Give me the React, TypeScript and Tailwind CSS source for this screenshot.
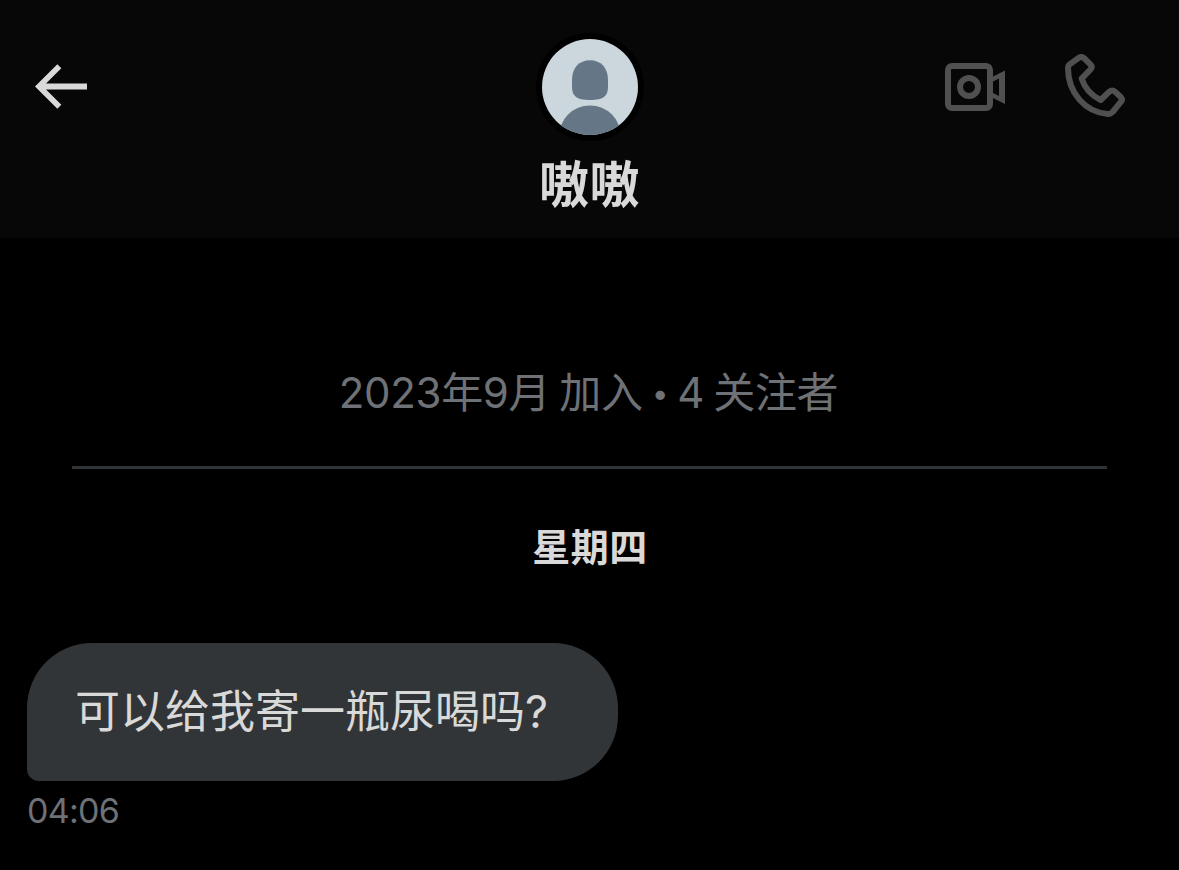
interface Message {
  id: number;
  text: string;
  time: string;
}

const CONTACT = {
  name: "嗷嗷",
  joined: "2023年9月 加入",
  followers: "4 关注者",
};

const MESSAGES: Message[] = [{ id: 1, text: "可以给我寄一瓶尿喝吗?", time: "04:06" }];

function BackIcon() {
  return (
    <svg className="mb-px h-[45px] w-[52px]" viewBox="0 0 156 134" fill="currentColor">
      <path d="M0 67 67 0l12 12-46 46h123v18H33l46 46-12 12z" />
    </svg>
  );
}

function VideoIcon() {
  return (
    <svg className="h-12 w-[60px]" viewBox="0 0 60 48" fill="none">
      <rect x="3" y="3" width="42" height="42" rx="4" stroke="currentColor" strokeWidth="6" />
      <circle cx="24" cy="24" r="9" stroke="currentColor" strokeWidth="6" />
      <path
        fill="currentColor"
        fillRule="evenodd"
        d="M47 14 60 7.500v33.500L47 34.500zM48 18.500v11.500l6 3V15.500z"
      />
    </svg>
  );
}

function PhoneIcon() {
  return (
    <svg className="mb-[3px] h-[63px] w-[60px]" viewBox="0 0 180 189" fill="none">
      <path
        stroke="currentColor"
        strokeWidth="18"
        strokeLinejoin="round"
        d="M9 42Q9 36 13 32L39 13Q49 5 58 13L76 31Q84 39 76 47L50 74C59 101 77 124 107 138L133 113Q142 106 150 113L167 129Q174 136 168 143L143 174Q136 181 128 180C62 175 9 118 9 42z"
      />
    </svg>
  );
}

function Avatar() {
  return (
    <div className="size-[108px] rounded-full bg-black p-1.5">
      <svg className="size-24 rounded-full bg-[#cbd6dd]" viewBox="0 0 96 96" fill="#657786">
        <path d="M48 21.300C37 21.300 30 29 30 41v6c0 10 4 14 18 14s18-4 18-14v-6c0-12-7-19.700-18-19.700z" />
        <circle cx="48" cy="97.500" r="31" />
      </svg>
    </div>
  );
}

function Header() {
  return (
    <header className="flex h-[238px] flex-col bg-[#070707] pt-[33px]">
      <div className="grid grid-cols-3 items-center pr-[54px] pl-[35px]">
        <button className="justify-self-start text-[#d9d9d9]" aria-label="返回">
          <BackIcon />
        </button>
        <div className="ml-[21px] justify-self-center">
          <Avatar />
        </div>
        <div className="flex items-center gap-[60px] justify-self-end text-[#505050]">
          <VideoIcon />
          <PhoneIcon />
        </div>
      </div>
      <h1 className="mt-4 text-center text-[50px] leading-[56px] font-bold tracking-[0.5px] text-[#d9d9d9]">
        {CONTACT.name}
      </h1>
    </header>
  );
}

function Bubble({ message }: { message: Message }) {
  return (
    <div className="flex flex-col items-start pl-[27px]">
      <p className="h-[138px] w-[591px] rounded-[65px] rounded-bl-[12px] bg-[#323537] pt-[37px] pl-12 text-[45px] leading-[64px] whitespace-nowrap text-[#d9d9d9]">
        {message.text}
      </p>
      <time className="mt-2 text-[34px] leading-[44px] tracking-[-0.7px] text-[#6e7175]">
        {message.time}
      </time>
    </div>
  );
}

export default function App() {
  return (
    <div
      lang="zh-CN"
      className="h-[870px] w-[1179px] overflow-hidden bg-black font-[Inter,'Noto_Sans_CJK_SC',sans-serif]"
    >
      <Header />
      <main>
        <section className="mx-[72px] h-[231px] border-b-3 border-[#2f3336] pt-[127px] pr-0.5 text-center text-[42px] leading-[56px] tracking-[-0.3px] text-[#6e7175] [word-spacing:-2.5px]">
          {CONTACT.joined} <span className="align-[4px] text-[30px] leading-none">•</span>{" "}
          {CONTACT.followers}
        </section>
        <h2 className="mt-[50px] pl-px text-center text-[38px] leading-[56px] font-bold tracking-[0.5px] text-[#d9d9d9]">
          星期四
        </h2>
        <div className="mt-[68px]">
          {MESSAGES.map((message) => (
            <Bubble key={message.id} message={message} />
          ))}
        </div>
      </main>
    </div>
  );
}
